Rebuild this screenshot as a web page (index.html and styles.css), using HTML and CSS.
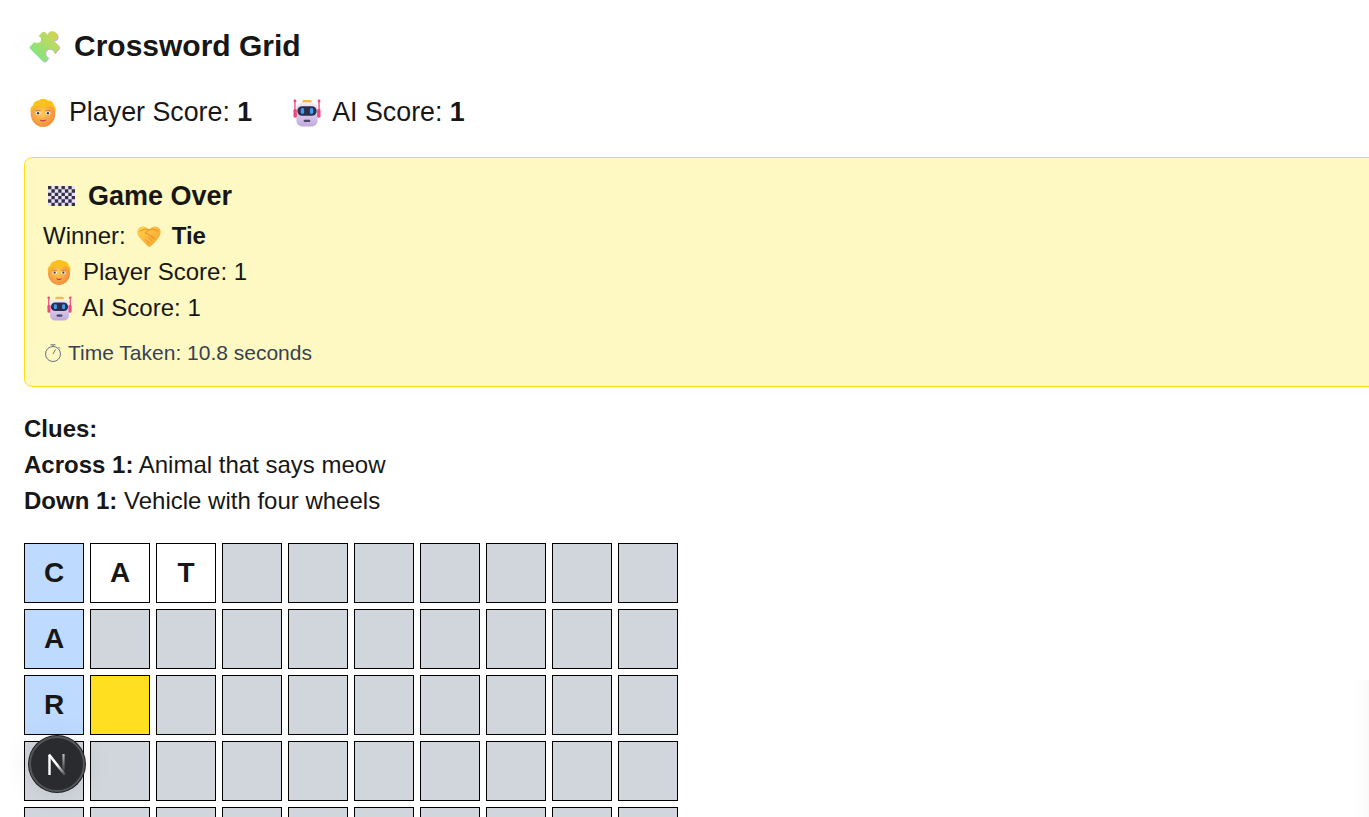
FILE: index.html
```html
<!DOCTYPE html>
<html lang="en">
<head>
<meta charset="utf-8">
<title>Crossword Grid</title>
<link rel="stylesheet" href="styles.css">
</head>
<body>
<svg class="defs" width="0" height="0" aria-hidden="true">
  <defs>
    <linearGradient id="puzzleFill" x1="0" y1="1" x2="1" y2="0">
      <stop offset="0" stop-color="#6fe98a"/><stop offset="1" stop-color="#dcd34e"/>
    </linearGradient>
    <radialGradient id="faceFill" cx="0.45" cy="0.45" r="0.65">
      <stop offset="0" stop-color="#ffcf4f"/><stop offset="1" stop-color="#f0823a"/>
    </radialGradient>
    <linearGradient id="robotFill" x1="0" y1="0" x2="0" y2="1">
      <stop offset="0" stop-color="#f3edf4"/><stop offset="1" stop-color="#bfa9de"/>
    </linearGradient>
    <linearGradient id="shakeFill" x1="0" y1="0" x2="1" y2="1">
      <stop offset="0" stop-color="#ffd24d"/><stop offset="1" stop-color="#f7a02c"/>
    </linearGradient>
    <linearGradient id="nGrad" gradientUnits="userSpaceOnUse" x1="6" y1="4" x2="22" y2="25">
      <stop offset="0.5" stop-color="#fff"/><stop offset="1" stop-color="#fff" stop-opacity="0.1"/>
    </linearGradient>
    <linearGradient id="nStem" gradientUnits="userSpaceOnUse" x1="0" y1="4" x2="0" y2="22">
      <stop offset="0" stop-color="#fff" stop-opacity="0.7"/><stop offset="1" stop-color="#fff" stop-opacity="0.05"/>
    </linearGradient>
    <symbol id="face" viewBox="3 2.500 26 28.500">
      <ellipse cx="16" cy="17.500" rx="12.500" ry="13.500" fill="url(#faceFill)"/>
      <path d="M3.500 16c-1-3 0-6 2.500-7 0-3 3-5 6-5 1-2 7-2 9 0 3 0 6 2 6 5 2 1 2.500 4 1.500 7-1-2.500-2.500-5-4.500-6-4 1-10 1-14 0-3 1-5 3.500-6.500 6z" fill="#fcc21b"/>
      <ellipse cx="11" cy="17" rx="2.600" ry="1.800" fill="#fff"/><ellipse cx="21" cy="17" rx="2.600" ry="1.800" fill="#fff"/>
      <circle cx="11" cy="17" r="1.300" fill="#4a3a3a"/><circle cx="21" cy="17" r="1.300" fill="#4a3a3a"/>
      <path d="M8.500 14.300h5M18.500 14.300h5" stroke="#c9772b" stroke-width=".8"/>
      <path d="M12.500 23c2 1.600 5 1.600 7 0-1 3-6 3-7 0z" fill="#b0245c"/>
    </symbol>
    <symbol id="robot" viewBox="1.500 1.900 29 28.300">
      <path d="M3.500 4v16M28.500 4v16" stroke="#f2477e" stroke-width="1.400"/>
      <circle cx="3.500" cy="3.500" r="1.500" fill="#f2477e"/><circle cx="28.500" cy="3.500" r="1.500" fill="#f2477e"/>
      <rect x="11" y="2.500" width="10" height="4" rx="1.800" fill="#f8b93c"/>
      <rect x="5" y="5" width="22" height="25" rx="6" fill="url(#robotFill)"/>
      <rect x="2" y="12" width="3.500" height="9" rx="1.500" fill="#f2477e"/><rect x="26.500" y="12" width="3.500" height="9" rx="1.500" fill="#f2477e"/>
      <rect x="6" y="9" width="20" height="10" rx="5" fill="#2c2f4c"/>
      <rect x="9.500" y="11" width="3.500" height="6" rx="1.700" fill="#3f9cf0"/><rect x="19" y="11" width="3.500" height="6" rx="1.700" fill="#3f9cf0"/>
      <rect x="12.500" y="23" width="7" height="2.500" rx="1.200" fill="#4a4560"/>
    </symbol>
    <path id="puzzlePath" d="M1 16.500L5.500 12C7 13.500 11 13.500 12 10.500C12.800 8 11 6.500 9.500 6L13 2.500C14 1.500 15.500 1.500 16.500 2.500L18.500 5.500C18.500 2.500 22 .5 25 1.500C29 3 30 7.500 27.500 9.500C26.500 10.300 25.500 10.500 24.500 10.500L29.500 15.500C30.500 16.500 30.500 18 29.500 19L25.500 23.500C25 20.500 21.500 18 18.500 19.500C15.500 21 15.500 25.500 19.500 27.500L17 31C16 32 14.500 32 13.500 31L1 18.500C.5 18 .5 17 1 16.500z"/>
  </defs>
</svg>
<main class="page">
  <h1 class="title">
    <svg class="ico puzzle" viewBox="0 0 32 33" aria-hidden="true">
      <use href="#puzzlePath" fill="#c9a8f0" transform="translate(.8 .8)"/>
      <use href="#puzzlePath" fill="url(#puzzleFill)"/>
    </svg>
    <span>Crossword Grid</span>
  </h1>
  <div class="scores">
    <div class="score"><svg class="ico face-lg"><use href="#face"/></svg><span>Player Score: <b>1</b></span></div>
    <div class="score"><svg class="ico robot-lg"><use href="#robot"/></svg><span>AI Score: <b>1</b></span></div>
  </div>
  <section class="result">
    <h2 class="result-title">
      <svg class="ico flag" viewBox="0 0 27 20" aria-hidden="true">
        <rect width="27" height="20" fill="#e9e2f4"/>
        <path d="M0 0h3.400v3.300H0zM6.800 0h3.400v3.300H6.800zM13.500 0h3.400v3.300h-3.400zM20.300 0h3.400v3.300h-3.400zM3.400 3.300h3.400v3.400H3.400zM10.200 3.300h3.300v3.400h-3.300zM16.900 3.300h3.400v3.400h-3.400zM23.700 3.300H27v3.400h-3.300zM0 6.700h3.400V10H0zM6.800 6.700h3.400V10H6.800zM13.500 6.700h3.400V10h-3.400zM20.300 6.700h3.400V10h-3.400zM3.400 10h3.400v3.300H3.400zM10.200 10h3.300v3.300h-3.300zM16.900 10h3.400v3.300h-3.400zM23.700 10H27v3.300h-3.300zM0 13.300h3.400v3.400H0zM6.800 13.300h3.400v3.400H6.800zM13.500 13.300h3.400v3.400h-3.400zM20.300 13.300h3.400v3.400h-3.400zM3.400 16.700h3.400V20H3.400zM10.200 16.700h3.300V20h-3.300zM16.900 16.700h3.400V20h-3.400zM23.700 16.700H27V20h-3.300z" fill="#35304a"/>
      </svg>
      <span>Game Over</span>
    </h2>
    <div class="line"><span>Winner:</span>
      <svg class="ico shake" viewBox="0 0 24 21" aria-hidden="true">
        <path d="M12 3.500C9.500.5 5-.5 2.500 1.500-.5 4-.5 8 2 11c2.500 3 6 6.500 8.500 9 1 1 2.200 1 3.300.2C16.500 18 20 14.500 22 11c2-3 2.500-7-.5-9.500C19-.5 14.500.5 12 3.500z" fill="url(#shakeFill)"/>
        <path d="M3 5l5-2 4 1-4 3 3 1 6 5M9 14l3 3M11.500 11.500l3 3M14.500 9.500l3 3M12 4l4-1 5 2" stroke="#ea9224" stroke-width="1" fill="none" stroke-linecap="round" stroke-linejoin="round"/>
      </svg>
      <b>Tie</b>
    </div>
    <div class="line face-line"><svg class="ico face-sm"><use href="#face"/></svg><span>Player Score: 1</span></div>
    <div class="line robot-line"><svg class="ico robot-sm"><use href="#robot"/></svg><span>AI Score: 1</span></div>
    <div class="time">
      <svg class="ico watch" viewBox="0 0 18 18" aria-hidden="true">
        <circle cx="9" cy="10" r="7.500" fill="none" stroke="#6b7280" stroke-width="1"/>
        <path d="M6.500.8h5M9 1v1.500M9 10l2.500-4.500M14.500 3l1.500 1.500" stroke="#6b7280" stroke-width="1" fill="none"/>
      </svg>
      <span>Time Taken: 10.8 seconds</span>
    </div>
  </section>
  <div class="clues">
    <p><b>Clues:</b></p>
    <p><b>Across 1:</b> Animal that says meow</p>
    <p><b>Down 1:</b> Vehicle with four wheels</p>
  </div>
  <div class="grid" id="grid">
    <div class="cell on">C</div><div class="cell open">A</div><div class="cell open">T</div><div class="cell"></div><div class="cell"></div><div class="cell"></div><div class="cell"></div><div class="cell"></div><div class="cell"></div><div class="cell"></div>
    <div class="cell on">A</div><div class="cell"></div><div class="cell"></div><div class="cell"></div><div class="cell"></div><div class="cell"></div><div class="cell"></div><div class="cell"></div><div class="cell"></div><div class="cell"></div>
    <div class="cell on">R</div><div class="cell active"></div><div class="cell"></div><div class="cell"></div><div class="cell"></div><div class="cell"></div><div class="cell"></div><div class="cell"></div><div class="cell"></div><div class="cell"></div>
    <div class="cell"></div><div class="cell"></div><div class="cell"></div><div class="cell"></div><div class="cell"></div><div class="cell"></div><div class="cell"></div><div class="cell"></div><div class="cell"></div><div class="cell"></div>
    <div class="cell"></div><div class="cell"></div><div class="cell"></div><div class="cell"></div><div class="cell"></div><div class="cell"></div><div class="cell"></div><div class="cell"></div><div class="cell"></div><div class="cell"></div>
  </div>
</main>
<div class="devtools" aria-hidden="true">
  <svg class="n-logo" viewBox="0 0 28 28">
    <path d="M6.500 25V5" fill="none" stroke="#fff" stroke-width="2.400"/>
    <path d="M6 4.500L22 25" fill="none" stroke="url(#nGrad)" stroke-width="2.600"/>
    <path d="M20.500 4v18" fill="none" stroke="url(#nStem)" stroke-width="2.200"/>
  </svg>
</div>
<div class="edge-shade" aria-hidden="true"></div>
</body>
</html>
```

FILE: styles.css
```css
html, body {
  margin: 0;
  height: 100%;
  overflow: hidden;
  background: #fff;
}
body {
  font-family: "Liberation Sans", Arial, sans-serif;
  color: #171717;
  font-size: 24px;
  line-height: 36px;
}
.defs { position: absolute; }
.page { padding: 24px 0 0 24px; }
.ico { flex: none; display: block; }
.title {
  display: flex;
  align-items: center;
  gap: 13px;
  margin: 0;
  padding-left: 5px;
  font-size: 30px;
  line-height: 44px;
  font-weight: 700;
}
.puzzle { width: 32px; height: 33px; }
.scores {
  display: flex;
  gap: 41px;
  margin-top: 24px;
  margin-bottom: -1px;
  font-size: 26.8px;
  line-height: 41px;
  padding-left: 6px;
}
.score { display: flex; align-items: center; gap: 13px; }
.face-lg { width: 26px; height: 28px; }
.robot-lg { width: 28px; height: 28px; }
.score + .score { gap: 11px; }
.result {
  margin: 25px -40px 0 0;
  padding: 20px 18px 16px;
  height: 230px;
  box-sizing: border-box;
  background: #fef9c2;
  border: 1px solid #ffdf20;
  border-radius: 8px;
}
.result-title {
  display: flex;
  align-items: center;
  gap: 13px;
  margin: 0 0 4px;
  padding-left: 5px;
  font-size: 27px;
  line-height: 36px;
  font-weight: 700;
}
.flag { width: 27px; height: 20px; }
.line { display: flex; align-items: center; gap: 11px; height: 36px; }
.shake { width: 24px; height: 21px; }
.face-sm { width: 24px; height: 25px; margin-left: 4px; }
.face-line { gap: 12px; }
.robot-sm { width: 25px; height: 25px; margin-left: 4px; }
.robot-line { gap: 10px; }
.time {
  display: flex;
  align-items: center;
  gap: 6px;
  margin-top: 12px;
  font-size: 21px;
  line-height: 30px;
  color: #364153;
}
.watch { width: 18px; height: 18px; margin-left: 1px; }
.clues { margin-top: 24px; }
.clues p { margin: 0; }
.grid {
  display: grid;
  grid-template-columns: repeat(10, 60px);
  grid-auto-rows: 60px;
  gap: 6px;
  margin-top: 24px;
}
.cell {
  box-sizing: border-box;
  display: flex;
  align-items: center;
  justify-content: center;
  background: #d1d5dc;
  border: 1px solid #000;
  font-size: 28px;
  font-weight: 700;
}
.cell.on { background: #bedbff; }
.cell.open { background: #fff; }
.cell.active { background: #ffdf20; }
.devtools {
  position: fixed;
  left: 29px;
  top: 736px;
  width: 56px;
  height: 56px;
  box-sizing: border-box;
  display: flex;
  align-items: center;
  justify-content: center;
  border-radius: 50%;
  background: #2a2b2e;
  border: 2px solid #55565a;
  box-shadow: 0 0 0 1px #1c1c1e, 0 0 30px rgba(0, 0, 0, 0.09);
}
.n-logo { width: 28px; height: 28px; }
.edge-shade {
  position: fixed;
  right: 0;
  top: 680px;
  width: 14px;
  height: 137px;
  background: linear-gradient(to right, rgba(0, 0, 0, 0), rgba(0, 0, 0, 0.025));
}
```
